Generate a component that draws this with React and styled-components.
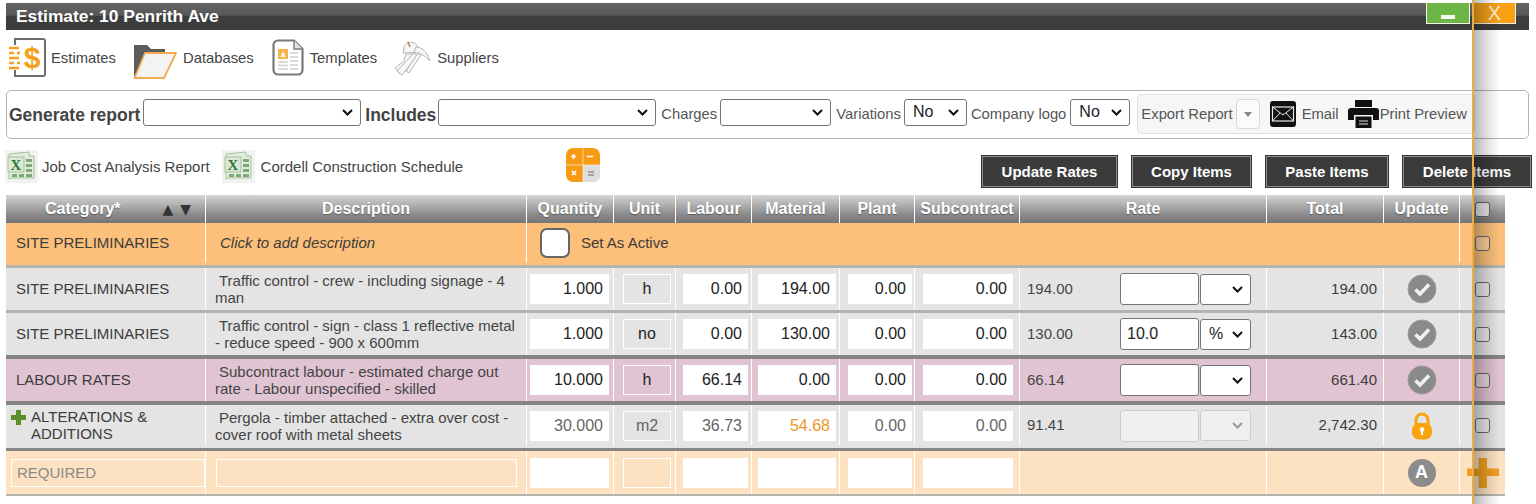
import React from "react";
import styled, { createGlobalStyle } from "styled-components";

const Global = createGlobalStyle`
  html, body { margin: 0; padding: 0; background: #fff; }
  body { font-family: "Liberation Sans", Arial, sans-serif; color: #444; overflow: hidden; }
`;

const chevron = color =>
  `url("data:image/svg+xml,%3Csvg xmlns='http://www.w3.org/2000/svg' width='11' height='7'%3E%3Cpath d='M1 1l4.500 4.500L10 1' fill='none' stroke='${color}' stroke-width='2'/%3E%3C/svg%3E")`;

const Page = styled.div`
  position: relative;
  width: 1536px;
  height: 504px;
  overflow: hidden;
  padding-top: 3px;
  box-sizing: border-box;
`;

const TitleBar = styled.header`
  height: 27px;
  margin: 0 7px 0 6px;
  padding: 0 13px 0 10px;
  display: flex;
  justify-content: space-between;
  align-items: flex-start;
  background: linear-gradient(#646464 0, #585858 45%, #3d3d3d 50%, #3b3b3b 100%);
`;
const Title = styled.h1`
  margin: 0;
  font-size: 17.4px;
  line-height: 26px;
  font-weight: 700;
  color: #fff;
`;
const WinButtons = styled.div`
  display: flex;
  gap: 3px;
`;
const WinButton = styled.button`
  width: ${p => p.$w}px;
  height: 21px;
  padding: 0;
  border: 1px solid #f3f3e8;
  border-top: none;
  background: ${p => p.$bg};
  color: #fff0d4;
  font: 400 20px/20px "Liberation Sans", Arial, sans-serif;
  display: flex;
  align-items: center;
  justify-content: center;
`;
const MinBar = styled.span`
  width: 14px;
  height: 4px;
  margin-top: 8px;
  background: #f4f8ee;
`;

const Nav = styled.nav`
  height: 60px;
  padding: 0 0 5px 9px;
  display: flex;
  align-items: center;
  box-sizing: border-box;
`;
const NavItem = styled.a`
  display: flex;
  align-items: center;
  gap: ${p => p.$gap}px;
  margin-right: ${p => p.$mr}px;
  font-size: 14.8px;
  color: #444;
`;

const ReportPanel = styled.section`
  height: 49px;
  margin: 0 7px 0 6px;
  padding: 3px 0 4px 2px;
  border: 1px solid #b4b4b4;
  border-radius: 5px;
  box-sizing: border-box;
  display: flex;
  align-items: center;
`;
const BoldLabel = styled.label`
  font-size: 17.5px;
  font-weight: 700;
  color: #444;
  margin: 2px ${p => p.$mr ?? 3}px 0 ${p => p.$ml || 0}px;
  white-space: nowrap;
`;
const Label = styled.label`
  font-size: 14.8px;
  color: #555;
  margin: 0 ${p => p.$mr ?? 3}px 1px ${p => p.$ml || 0}px;
  white-space: nowrap;
`;
const Select = styled.select`
  appearance: none;
  box-sizing: border-box;
  width: ${p => p.$w}px;
  height: ${p => p.$h || 27}px;
  margin-bottom: ${p => p.$mb ?? 3}px;
  padding: 0 0 2px 8px;
  font: 16px "Liberation Sans", Arial, sans-serif;
  color: #222;
  background: #fff ${chevron("%23111")} no-repeat right 7px center;
  border: 1px solid #767676;
  border-radius: 3px;
  flex: none;
  &:disabled {
    background: #efefef ${chevron("%23999")} no-repeat right 7px center;
    border-color: #ccc;
    opacity: 1;
  }
`;
const ExportPanel = styled.div`
  align-self: stretch;
  width: 338px;
  margin-left: 7px;
  box-sizing: border-box;
  padding-left: 3px;
  background: #f6f6f6;
  border: 1px solid #e0e0e0;
  border-radius: 4px;
  display: flex;
  align-items: center;
  font-size: 14.8px;
  color: #555;
  white-space: nowrap;
`;
const Caret = styled.button`
  width: 24px;
  height: 30px;
  margin: 0 10px 0 3px;
  padding: 0;
  flex: none;
  background: #fbfbfb;
  border: 1px solid #d8d8d8;
  border-radius: 4px;
  display: flex;
  align-items: center;
  justify-content: center;
  &::after {
    content: "";
    border: 4px solid transparent;
    border-top: 5px solid #888;
    margin-top: 4px;
  }
`;
const ExportText = styled.span`
  margin: 0 ${p => p.$mr || 0}px 0 ${p => p.$ml || 0}px;
`;

const ActionRow = styled.div`
  height: 56px;
  padding-left: 5px;
  display: flex;
  align-items: flex-start;
`;
const ExcelLink = styled.a`
  display: flex;
  align-items: center;
  gap: ${p => p.$gap}px;
  height: 33px;
  margin-top: 11px;
  margin-right: ${p => p.$mr}px;
  font-size: 15px;
  color: #444;
  white-space: nowrap;
`;
const CalcWrap = styled.div`
  margin: 9px 0 0 103px;
  width: 34px;
  height: 34px;
`;
const Buttons = styled.div`
  display: flex;
  gap: 13px;
  margin-left: auto;
  margin-right: 4px;
  margin-top: 16px;
`;
const ActionButton = styled.button`
  width: ${p => p.$w}px;
  height: 33px;
  padding: 0;
  background: #3b3b3b;
  color: #fff;
  border: 2px solid #8d8d8d;
  outline: 1px solid #333;
  outline-offset: -1px;
  font: 700 15px "Liberation Sans", Arial, sans-serif;
`;

const cols = "199px 321px 87px 62px 76px 88px 75px 105px 247px 117px 76px 46px";
const TableWrap = styled.div`
  width: 1499px;
  margin-left: 6px;
`;
const HeadRow = styled.div`
  display: grid;
  grid-template-columns: ${cols};
  height: 28px;
  background: linear-gradient(#d4d4d4 0, #b0b0b0 35%, #8a8a8a 70%, #767676 100%);
`;
const HeadCell = styled.div`
  display: flex;
  align-items: center;
  justify-content: ${p => p.$left ? "flex-start" : "center"};
  padding-left: ${p => p.$left ? 39 : 0}px;
  border-left: ${p => p.$first ? 0 : 1}px solid #fff;
  color: #fff;
  font-size: 16px;
  font-weight: 700;
  text-shadow: 0 1px 1px rgba(0,0,0,.35);
  white-space: nowrap;
  overflow: hidden;
`;
const SortArrows = styled.span`
  margin-left: 42px;
  display: flex;
  gap: 7px;
  color: #333;
  font-size: 14px;
  font-family: "DejaVu Sans", sans-serif;
  text-shadow: none;
`;

const tones = { active: "#fcc07a", gray: "#e4e4e4", pink: "#e0c4d2", fresh: "#fde2c2" };
const seps = { light: "#b4b4ac", dark: "#858585" };
const Row = styled.div`
  display: grid;
  grid-template-columns: ${cols};
  height: ${p => p.$h}px;
  box-sizing: border-box;
  padding-bottom: ${p => p.$pb || 0}px;
  background: ${p => tones[p.$tone]};
  border-bottom: ${p => p.$sepw}px solid ${p => seps[p.$sep]};
`;
const Cell = styled.div`
  display: flex;
  align-items: center;
  justify-content: ${p => p.$center ? "center" : p.$end ? "flex-end" : "flex-start"};
  padding-left: ${p => p.$pl || 0}px;
  padding-right: ${p => p.$pr || 0}px;
  padding-bottom: ${p => p.$pb || 0}px;
  border-left: ${p => p.$first ? 0 : 1}px solid #fff;
  grid-column: ${p => p.$span || "auto"};
  font-size: 15px;
  color: #3c3c3c;
  min-width: 0;
`;
const CategoryText = styled.span`
  line-height: 17px;
`;
const Desc = styled.div`
  line-height: 17px;
  font-size: 15px;
  color: #444;
  text-indent: 4px;
`;
const Hint = styled.em`
  color: #3c3c3c;
  font-style: italic;
  margin-left: 5px;
`;
const NumberInput = styled.input`
  box-sizing: border-box;
  width: ${p => p.$w}px;
  height: 30px;
  padding: 0 6px 0 0;
  border: 0;
  background: #fff;
  text-align: right;
  font: 16px "Liberation Sans", Arial, sans-serif;
  color: ${p => p.$color || "#222"};
`;
const UnitBox = styled.input`
  box-sizing: border-box;
  width: ${p => p.$w}px;
  height: 30px;
  padding: 0;
  border: 1px solid #fff;
  background: transparent;
  text-align: center;
  font: 16px "Liberation Sans", Arial, sans-serif;
  color: ${p => p.$color || "#222"};
`;
const RateValue = styled.span`
  width: 93px;
  flex: none;
  color: #444;
  padding-bottom: 2px;
`;
const RateInput = styled.input`
  box-sizing: border-box;
  width: 79px;
  height: 32px;
  margin-right: 1px;
  padding: 0 6px;
  flex: none;
  background: #fff;
  border: 1px solid #767676;
  border-radius: 3px;
  font: 16px "Liberation Sans", Arial, sans-serif;
  color: #222;
  &:disabled { background: #f0f0f2; border-color: #ccc; }
`;
const TextField = styled.input`
  box-sizing: border-box;
  width: ${p => p.$w}px;
  height: 28px;
  padding: 0 5px;
  border: 1px solid #fff;
  background: transparent;
  font: 16px "Liberation Sans", Arial, sans-serif;
  &::placeholder { color: #8a8a8a; font-size: 15px; opacity: 1; }
`;
const Check = styled.input.attrs({ type: "checkbox" })`
  appearance: none;
  box-sizing: border-box;
  width: 15px;
  height: 15px;
  margin: 0;
  background: ${p => p.$head ? "#e8e8e8" : "rgba(255,255,255,.25)"};
  border: 1.5px solid #666;
  border-radius: 3px;
`;
const BigCheck = styled.input.attrs({ type: "checkbox" })`
  appearance: none;
  box-sizing: border-box;
  width: 30px;
  height: 30px;
  margin: 2px 11px 0 0;
  background: #fff;
  border: 2px solid #666;
  border-radius: 7px;
`;
const AutoBadge = styled.span`
  width: 28px;
  height: 28px;
  border-radius: 50%;
  background: #8c8c8c;
  color: #fff;
  font-weight: 700;
  font-size: 18px;
  display: flex;
  align-items: center;
  justify-content: center;
`;
const PlusGlyph = styled.svg`
  flex: none;
  margin-right: 5px;
  align-self: flex-start;
  margin-top: 5px;
`;
const FolderSvg = styled.svg`
  margin-top: 9px;
`;
const BigPlusSvg = styled.svg`
  flex: none;
  margin: 0 -10px;
`;
const Overlay = styled.div`
  position: absolute;
  top: 0;
  bottom: 0;
  left: 1472px;
  width: 26px;
  border-left: 2px solid #e6ae45;
  background: linear-gradient(90deg, rgba(0,0,0,.28), rgba(0,0,0,.12) 50%, rgba(0,0,0,0));
  pointer-events: none;
`;

const EstimatesIcon = () => (
  <svg width="37" height="41" viewBox="0 0 37 41">
    <path d="M6 8 V2 H34 a2 2 0 0 1 2 2 V37 a2 2 0 0 1 -2 2 H6 V33" fill="#fff" stroke="#6e6e6e" strokeWidth="2" />
    <g stroke="#f6a020" strokeWidth="2.4"><path d="M0 11h10M0 16h5M8 16h3M0 21h10M0 26h5M8 26h3M0 31h10" /></g>
    <text x="23" y="31" textAnchor="middle" fontSize="30" fontWeight="700" fontFamily="Liberation Sans" fill="#f6a020">$</text>
  </svg>
);
const FolderIcon = () => (
  <FolderSvg width="44" height="36" viewBox="0 0 44 36">
    <path d="M1 33 V1 H14 L18 5 H32 V10 H14 L5 33 Z" fill="#5c5c5c" />
    <path d="M12 9 H43 L31 34 H1.5 Z" fill="#f3f3f3" stroke="#f2ab4e" strokeWidth="1.8" strokeLinejoin="round" />
  </FolderSvg>
);
const TemplateIcon = () => (
  <svg width="32" height="37" viewBox="0 0 32 37">
    <path d="M6 1.5 H22 L30.5 10 V31 a4.500 4.500 0 0 1 -4.500 4.500 H6 a4.500 4.500 0 0 1 -4.500 -4.500 V6 a4.500 4.500 0 0 1 4.500 -4.500 Z" fill="#fff" stroke="#7a7a7a" strokeWidth="2.2" />
    <path d="M22 1.500 V10 H30.500" fill="#e4e4e4" stroke="#7a7a7a" strokeWidth="1.4" />
    <rect x="6" y="10" width="10" height="10" fill="#f6b54a" />
    <path d="M11 12 l2.500 6 h-5 Z" fill="#fff" />
    <g stroke="#dcdcdc" strokeWidth="2"><path d="M6 23h10M6 26.500h10M6 30h10M18 14h8M18 18h8M18 22h8M18 26h8M18 30h8" /></g>
  </svg>
);
const SupplierIcon = () => (
  <svg width="37" height="37" viewBox="0 0 37 37">
    <g fill="#f7f7f7" stroke="#b4b4b4" strokeWidth="1" strokeLinejoin="round">
      <path d="M10 10 C10 3 20 0 24 8 L25 13 L9 14 Z" />
      <path d="M12 15 H22 L23 20 L13 31 L5 34 L1 29 L10 22 Z" />
      <path d="M3 32 L20 14 L23 17 L8 36 Z" />
      <path d="M22 8 C28 8 33 13 36 22 C31 17 27 14 20 13 Z" />
      <path d="M24 14 L27 16 L15 34 L12 32 Z" />
    </g>
    <path d="M14 3 l2 5" stroke="#b08a50" strokeWidth="1.6" />
  </svg>
);
const ExcelIcon = () => (
  <svg width="33" height="33" viewBox="0 0 33 33">
    <rect width="33" height="33" fill="#f1f3f0" />
    <path d="M4 4 L24 2 V6 H29 V28 H7 L4 29 Z" fill="#e3ecdd" stroke="#a5c29b" strokeWidth="1" />
    <rect x="3" y="7" width="16" height="15" fill="#dce8d3" stroke="#a5c29b" />
    <text x="11" y="20" textAnchor="middle" fontSize="15" fontWeight="700" fontFamily="Liberation Serif" fill="#2e7a37">X</text>
    <g fill="#7bab74">
      <rect x="21" y="9" width="6" height="3" /><rect x="21" y="14" width="6" height="3" /><rect x="21" y="19" width="6" height="3" />
      <rect x="7" y="24" width="5" height="3" /><rect x="14" y="24" width="5" height="3" /><rect x="21" y="24" width="6" height="3" />
    </g>
  </svg>
);
const CalcIcon = () => (
  <svg width="34" height="34" viewBox="0 0 34 34">
    <rect width="34" height="34" rx="7" fill="#f79a14" />
    <path d="M17 17 H34 V27 a7 7 0 0 1 -7 7 H17 Z" fill="#dedede" />
    <path d="M17 0 V34 M0 17 H34" stroke="#fff" strokeWidth=".8" opacity=".7" />
    <g stroke="#fff" strokeWidth="1.6">
      <path d="M5 8.500h5M7.500 6v5M21 8.500h6" />
      <path d="M6 23l4 4M10 23l-4 4" />
    </g>
    <path d="M22 24h6M22 27h6" stroke="#8e8e8e" strokeWidth="1.3" />
  </svg>
);
const MailIcon = () => (
  <svg width="26" height="26" viewBox="0 0 26 26">
    <rect width="26" height="26" rx="3" fill="#111" />
    <rect x="2.500" y="6" width="21" height="14" fill="none" stroke="#e8e8e8" strokeWidth="1.2" />
    <path d="M2.500 6 L13 14 L23.500 6 M2.500 20 L10 12 M23.500 20 L16 12" fill="none" stroke="#e8e8e8" strokeWidth="1" />
  </svg>
);
const PrinterIcon = () => (
  <svg width="31" height="28" viewBox="0 0 31 28">
    <path d="M7 0 H24 V7 H7 Z" fill="#111" />
    <path d="M3 8 H28 a3 3 0 0 1 3 3 V20 H25 V15 H6 V20 H0 V11 a3 3 0 0 1 3 -3 Z" fill="#111" />
    <path d="M7.500 16.500 H23.500 V28 H7.500 Z" fill="#111" />
    <path d="M11 21h9M11 24h9" stroke="#ddd" strokeWidth="1.2" />
  </svg>
);
const TickIcon = () => (
  <svg width="30" height="30" viewBox="0 0 30 30">
    <circle cx="15" cy="15" r="14" fill="#8a8a8a" stroke="#9b9b9b" />
    <path d="M8.500 15.500 L13 20 L22 10.500" fill="none" stroke="#f2f2f2" strokeWidth="3.6" />
  </svg>
);
const LockIcon = () => (
  <svg width="22" height="28" viewBox="0 0 22 28">
    <path d="M5 13 V8 a6 6 0 0 1 12 0 V13" fill="none" stroke="#f9a30f" strokeWidth="3" />
    <rect x="1" y="11" width="20" height="16.500" rx="7" fill="#f9a30f" />
    <circle cx="11" cy="17.500" r="2.200" fill="#fff" />
    <rect x="10" y="18" width="2" height="5" fill="#fff" />
  </svg>
);
const BigPlus = () => (
  <BigPlusSvg width="32" height="30" viewBox="0 0 32 30">
    <path d="M11.500 0 H20 V10.500 H32 V18 H20 V30 H11.500 V18 H0 V10.500 H11.500 Z" fill="#f0a020" />
  </BigPlusSvg>
);

const numberCols = [
  { key: "qty", pl: 3, w: 79 },
  { key: "unit", pl: 9, w: 48, unit: true },
  { key: "labour", pl: 7, w: 65 },
  { key: "material", pl: 6, w: 78 },
  { key: "plant", pl: 8, w: 64 },
  { key: "sub", pl: 8, w: 90 },
];

const items = [
  { tone: "gray", h: 45, sep: "light", sepw: 3, cat: "SITE PRELIMINARIES", desc: "Traffic control - crew - including signage - 4 man",
    qty: "1.000", unit: "h", labour: "0.00", material: "194.00", plant: "0.00", sub: "0.00", rate: "194.00", mark: "", pct: "", total: "194.00" },
  { tone: "gray", h: 46, sep: "dark", sepw: 4, cat: "SITE PRELIMINARIES", desc: "Traffic control - sign - class 1 reflective metal - reduce speed - 900 x 600mm",
    qty: "1.000", unit: "no", labour: "0.00", material: "130.00", plant: "0.00", sub: "0.00", rate: "130.00", mark: "10.0", pct: "%", total: "143.00" },
  { tone: "pink", h: 46, sep: "dark", sepw: 4, cat: "LABOUR RATES", desc: "Subcontract labour - estimated charge out rate - Labour unspecified - skilled",
    qty: "10.000", unit: "h", labour: "66.14", material: "0.00", plant: "0.00", sub: "0.00", rate: "66.14", mark: "", pct: "", total: "661.40" },
  { tone: "gray", h: 46, sep: "dark", sepw: 3, pb: 2, cat: "ALTERATIONS & ADDITIONS", plus: true, locked: true, desc: "Pergola - timber attached - extra over cost - cover roof with metal sheets",
    qty: "30.000", unit: "m2", labour: "36.73", material: "54.68", plant: "0.00", sub: "0.00", rate: "91.41", mark: "", pct: "", total: "2,742.30" },
];

const heads = ["Quantity", "Unit", "Labour", "Material", "Plant", "Subcontract", "Rate", "Total", "Update"];

const ItemRow = ({ item }) => (
  <Row $tone={item.tone} $h={item.h} $sep={item.sep} $sepw={item.sepw} $pb={item.pb}>
    <Cell $first $pl={item.plus ? 5 : 10} $pb={2}>
      {item.plus && (
        <PlusGlyph width="15" height="15" viewBox="0 0 15 15">
          <path d="M5 0 H10 V5 H15 V10 H10 V15 H5 V10 H0 V5 H5 Z" fill="#5b8f2c" />
        </PlusGlyph>
      )}
      <CategoryText>{item.cat}</CategoryText>
    </Cell>
    <Cell $pl={9} $pr={6}><Desc>{item.desc}</Desc></Cell>
    {numberCols.map(c => {
      const muted = item.locked ? (c.key === "material" ? "#f0962a" : "#666") : undefined;
      return (
        <Cell key={c.key} $pl={c.pl}>
          {c.unit
            ? <UnitBox readOnly $w={c.w} value={item[c.key]} $color={muted} />
            : <NumberInput readOnly $w={c.w} value={item[c.key]} $color={muted} />}
        </Cell>
      );
    })}
    <Cell $pl={7}>
      <RateValue>{item.rate}</RateValue>
      <RateInput readOnly value={item.mark} disabled={item.locked} />
      <Select $w={51} $h={31} $mb={0} defaultValue={item.pct} disabled={item.locked}>
        <option value=""></option>
        <option value="%">%</option>
      </Select>
    </Cell>
    <Cell $end $pr={6} $pb={2}>{item.total}</Cell>
    <Cell $center>{item.locked ? <LockIcon /> : <TickIcon />}</Cell>
    <Cell $center><Check /></Cell>
  </Row>
);

export default function App() {
  return (
    <Page>
      <Global />
      <TitleBar>
        <Title>Estimate: 10 Penrith Ave</Title>
        <WinButtons>
          <WinButton $w={44} $bg="#6db544"><MinBar /></WinButton>
          <WinButton $w={43} $bg="linear-gradient(90deg,#f7a41c,#f9a011)">X</WinButton>
        </WinButtons>
      </TitleBar>

      <Nav>
        <NavItem $gap={5} $mr={17}><EstimatesIcon />Estimates</NavItem>
        <NavItem $gap={6} $mr={18}><FolderIcon />Databases</NavItem>
        <NavItem $gap={6} $mr={17}><TemplateIcon />Templates</NavItem>
        <NavItem $gap={6} $mr={0}><SupplierIcon />Suppliers</NavItem>
      </Nav>

      <ReportPanel>
        <BoldLabel>Generate report</BoldLabel>
        <Select $w={218}><option></option></Select>
        <BoldLabel $ml={4} $mr={2}>Includes</BoldLabel>
        <Select $w={218}><option></option></Select>
        <Label $ml={5}>Charges</Label>
        <Select $w={111}><option></option></Select>
        <Label $ml={5} $mr={3}>Variations</Label>
        <Select $w={63}><option>No</option></Select>
        <Label $ml={4} $mr={4}>Company logo</Label>
        <Select $w={60}><option>No</option></Select>
        <ExportPanel>
          <ExportText>Export Report</ExportText>
          <Caret aria-label="Export options" />
          <MailIcon />
          <ExportText $ml={6} $mr={9}>Email</ExportText>
          <PrinterIcon />
          <ExportText $ml={1}>Print Preview</ExportText>
        </ExportPanel>
      </ReportPanel>

      <ActionRow>
        <ExcelLink $gap={4} $mr={12}><ExcelIcon />Job Cost Analysis Report</ExcelLink>
        <ExcelLink $gap={6} $mr={0}><ExcelIcon />Cordell Construction Schedule</ExcelLink>
        <CalcWrap><CalcIcon /></CalcWrap>
        <Buttons>
          <ActionButton $w={137}>Update Rates</ActionButton>
          <ActionButton $w={121}>Copy Items</ActionButton>
          <ActionButton $w={124}>Paste Items</ActionButton>
          <ActionButton $w={130}>Delete Items</ActionButton>
        </Buttons>
      </ActionRow>

      <TableWrap>
        <HeadRow>
          <HeadCell $first $left>Category*<SortArrows><span>▲</span><span>▼</span></SortArrows></HeadCell>
          <HeadCell>Description</HeadCell>
          {heads.map(h => <HeadCell key={h}>{h}</HeadCell>)}
          <HeadCell><Check $head /></HeadCell>
        </HeadRow>

        <Row $tone="active" $h={45} $sep="light" $sepw={3} $pb={2}>
          <Cell $first $pl={10} $pb={2}>SITE PRELIMINARIES</Cell>
          <Cell $pl={9} $pb={2}><Hint>Click to add description</Hint></Cell>
          <Cell $span="3 / span 9" $pl={13} $pb={2}><BigCheck />Set As Active</Cell>
          <Cell $center><Check /></Cell>
        </Row>

        {items.map((item, i) => <ItemRow key={i} item={item} />)}

        <Row $tone="fresh" $h={45} $sep="light" $sepw={2}>
          <Cell $first $pl={5}><TextField $w={194} placeholder="REQUIRED" /></Cell>
          <Cell $pl={10}><TextField $w={301} /></Cell>
          {numberCols.map(c => (
            <Cell key={c.key} $pl={c.pl}>
              {c.unit ? <UnitBox $w={c.w} /> : <NumberInput $w={c.w} />}
            </Cell>
          ))}
          <Cell />
          <Cell />
          <Cell $center><AutoBadge>A</AutoBadge></Cell>
          <Cell $center><BigPlus /></Cell>
        </Row>
      </TableWrap>

      <Overlay />
    </Page>
  );
}
